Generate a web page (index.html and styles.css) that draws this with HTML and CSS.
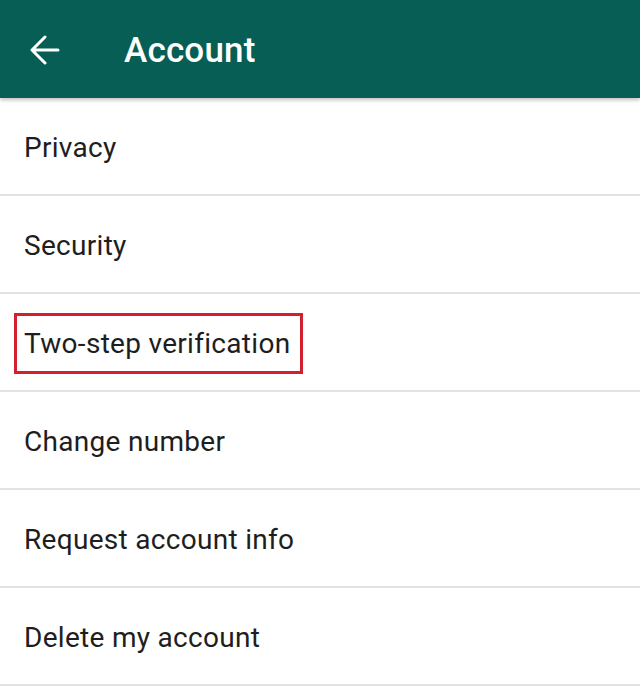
FILE: index.html
```html
<!DOCTYPE html>
<html>
<head>
<meta charset="utf-8">
<link rel="stylesheet" href="styles.css">
</head>
<body>
<header class="appbar">
  <span class="back">
    <svg width="30" height="30" viewBox="0 0 30 30"><path d="M28 15H3M15 2L2 15l13 13" fill="none" stroke="#fff" stroke-width="3" stroke-linecap="round" stroke-linejoin="round"/></svg>
  </span>
  <h1 class="title">Account</h1>
</header>
<ul class="list">
  <li class="item"><span>Privacy</span></li>
  <li class="item"><span>Security</span></li>
  <li class="item"><span class="highlight">Two-step verification</span></li>
  <li class="item"><span>Change number</span></li>
  <li class="item"><span>Request account info</span></li>
  <li class="item"><span>Delete my account</span></li>
</ul>
</body>
</html>
```
FILE: styles.css
```css
html, body {
  margin: 0;
  padding: 0;
  background: #fff;
  font-family: Roboto, "Liberation Sans", sans-serif;
}
.appbar {
  height: 98px;
  background: #075e54;
  display: flex;
  align-items: center;
  position: relative;
  box-shadow: 0 2px 4px rgba(0,0,0,0.25);
  z-index: 1;
}
.back {
  width: 30px;
  height: 30px;
  margin-left: 30px;
  margin-top: 2px;
  display: flex;
}
.title {
  margin: 0 0 0 64px;
  padding-top: 4px;
  color: #fff;
  font-size: 35px;
  font-weight: 500;
  letter-spacing: 0.2px;
  line-height: 40px;
}
.list {
  list-style: none;
  margin: 0;
  padding: 0;
}
.item {
  border-bottom: 2px solid #e2e2e2;
  display: flex;
  align-items: center;
  padding-left: 24px;
  font-size: 28px;
  letter-spacing: 0.3px;
  color: #1e1e1e;
  padding-top: 2px;
  box-sizing: border-box;
  height: 98px;
}
.highlight {
  border: 3px solid #d3202f;
  padding: 11px 10px 10px 7px;
  margin-left: -10px;
  line-height: 34px;
}
```
